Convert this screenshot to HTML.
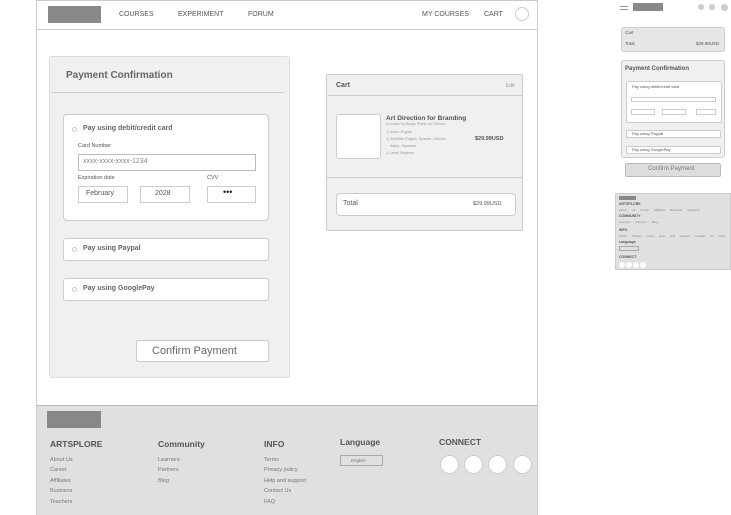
<!DOCTYPE html><html><head><style>
*{margin:0;padding:0;box-sizing:border-box}
body{width:731px;height:515px;background:#fff;font-family:"Liberation Sans",sans-serif;color:#555;position:relative;overflow:hidden}
.a{position:absolute}
.t{position:absolute;white-space:nowrap}
.mh{position:absolute;left:619px;font-size:3.5px;font-weight:bold;white-space:nowrap}
.ml{position:absolute;left:619px;font-size:3px;color:#888;white-space:nowrap;word-spacing:4px}
</style></head><body>
<div class="a" style="left:36px;top:0;width:502px;height:515px;border:1px solid #ccc;border-bottom:none"></div>
<div class="a" style="left:36px;top:29px;width:502px;height:1px;background:#ccc"></div>
<div class="a" style="left:48px;top:6px;width:53px;height:17px;background:#888"></div>
<div class="t" style="left:119px;top:11px;font-size:7px">COURSES</div>
<div class="t" style="left:178px;top:11px;font-size:7px">EXPERIMENT</div>
<div class="t" style="left:248px;top:11px;font-size:7px">FORUM</div>
<div class="t" style="left:422px;top:11px;font-size:7px">MY COURSES</div>
<div class="t" style="left:484px;top:11px;font-size:7px">CART</div>
<div class="a" style="left:515px;top:7px;width:14px;height:14px;border:1px solid #ccc;border-radius:50%"></div>

<div class="a" style="left:49px;top:56px;width:241px;height:322px;background:#f0f0f0;border:1px solid #ddd;border-radius:3px"></div>
<div class="t" style="left:66px;top:70px;font-size:10px;font-weight:bold;color:#666">Payment Confirmation</div>
<div class="a" style="left:52px;top:92px;width:232px;height:1px;background:#ccc"></div>
<div class="a" style="left:63px;top:114px;width:206px;height:107px;background:#fff;border:1px solid #ccc;border-radius:4px"></div>
<div class="a" style="left:72px;top:127px;width:5px;height:5px;border:1px solid #ccc;border-radius:50%"></div>
<div class="t" style="left:83px;top:125px;font-size:7px;font-weight:bold;color:#666">Pay using debit/credit card</div>
<div class="t" style="left:78px;top:143px;font-size:5.5px">Card Number</div>
<div class="a" style="left:78px;top:154px;width:178px;height:17px;border:1px solid #bbb"></div>
<div class="t" style="left:83px;top:158px;font-size:7px;color:#888">xxxx-xxxx-xxxx-1234</div>
<div class="t" style="left:78px;top:175px;font-size:5.5px">Expiration date</div>
<div class="t" style="left:207px;top:175px;font-size:5.5px">CVV</div>
<div class="a" style="left:78px;top:186px;width:50px;height:17px;border:1px solid #ccc"></div>
<div class="t" style="left:86px;top:190px;font-size:7px">February</div>
<div class="a" style="left:140px;top:186px;width:50px;height:17px;border:1px solid #ccc"></div>
<div class="t" style="left:155px;top:190px;font-size:7px">2028</div>
<div class="a" style="left:207px;top:186px;width:49px;height:17px;border:1px solid #ccc"></div>
<div class="t" style="left:223px;top:187px;font-size:9px;color:#222">•••</div>
<div class="a" style="left:63px;top:238px;width:206px;height:23px;background:#fff;border:1px solid #ccc;border-radius:3px"></div>
<div class="a" style="left:72px;top:247px;width:5px;height:5px;border:1px solid #ccc;border-radius:50%"></div>
<div class="t" style="left:83px;top:245px;font-size:7px;font-weight:bold;color:#666">Pay using Paypal</div>
<div class="a" style="left:63px;top:278px;width:206px;height:23px;background:#fff;border:1px solid #ccc;border-radius:3px"></div>
<div class="a" style="left:72px;top:287px;width:5px;height:5px;border:1px solid #ccc;border-radius:50%"></div>
<div class="t" style="left:83px;top:285px;font-size:7px;font-weight:bold;color:#666">Pay using GooglePay</div>
<div class="a" style="left:136px;top:340px;width:133px;height:22px;background:#fff;border:1px solid #ccc;border-radius:2px"></div>
<div class="t" style="left:152px;top:345px;font-size:11px;color:#666">Confirm Payment</div>

<div class="a" style="left:326px;top:74px;width:197px;height:157px;background:#f0f0f0;border:1px solid #ccc;border-radius:2px"></div>
<div class="t" style="left:336px;top:82px;font-size:7px;font-weight:bold">Cart</div>
<div class="t" style="left:506px;top:83px;font-size:5px;color:#999">Edit</div>
<div class="a" style="left:328px;top:95px;width:194px;height:1px;background:#ccc"></div>
<div class="a" style="left:336px;top:114px;width:45px;height:45px;background:#fff;border:1px solid #ccc;border-radius:3px"></div>
<div class="t" style="left:386px;top:115px;font-size:6.5px;font-weight:bold">Art Direction for Branding</div>
<div class="t" style="left:386px;top:122px;font-size:3.5px;color:#999">A course by Mango Pixels, Art Director</div>
<div class="t" style="left:386px;top:130px;font-size:3.5px;color:#999">◎ Audio: English</div>
<div class="t" style="left:386px;top:137px;font-size:3.5px;color:#999">◎ Subtitles: English, Spanish, German,</div>
<div class="t" style="left:390px;top:144px;font-size:3.5px;color:#999">Italian, Japanese</div>
<div class="t" style="left:386px;top:151px;font-size:3.5px;color:#999">◎ Level: Beginner</div>
<div class="t" style="left:475px;top:136px;font-size:5.5px;font-weight:bold">$29.99USD</div>
<div class="a" style="left:326px;top:177px;width:197px;height:1px;background:#ccc"></div>
<div class="a" style="left:336px;top:193px;width:180px;height:23px;background:#fff;border:1px solid #ccc;border-radius:4px"></div>
<div class="t" style="left:343px;top:200px;font-size:7px">Total</div>
<div class="t" style="left:473px;top:201px;font-size:5.5px">$29.99USD</div>

<div class="a" style="left:36px;top:405px;width:502px;height:110px;background:#e0e0e0;border-top:1px solid #bbb;border-left:1px solid #ccc;border-right:1px solid #ccc"></div>
<div class="a" style="left:47px;top:411px;width:54px;height:17px;background:#888"></div>
<div class="t" style="left:50px;top:439px;font-size:8.5px;font-weight:bold">ARTSPLORE</div>
<div class="t" style="left:158px;top:439px;font-size:8.5px;font-weight:bold">Community</div>
<div class="t" style="left:264px;top:439px;font-size:8.5px;font-weight:bold">INFO</div>
<div class="t" style="left:340px;top:437px;font-size:8.5px;font-weight:bold">Language</div>
<div class="t" style="left:439px;top:437px;font-size:8.5px;font-weight:bold">CONNECT</div>
<div class="t" style="left:50px;top:455px;font-size:5.5px;line-height:10.4px;color:#777">About Us<br>Career<br>Affiliates<br>Business<br>Teachers</div>
<div class="t" style="left:158px;top:455px;font-size:5.5px;line-height:10.4px;color:#777">Learners<br>Partners<br>Blog</div>
<div class="t" style="left:264px;top:455px;font-size:5.5px;line-height:10.4px;color:#777">Terms<br>Privacy policy<br>Help and support<br>Contact Us<br>FAQ</div>
<div class="a" style="left:340px;top:455px;width:43px;height:11px;border:1px solid #aaa"></div>
<div class="t" style="left:351px;top:458px;font-size:4.5px;color:#777">English</div>
<div class="a" style="left:440px;top:455px;width:19px;height:19px;border-radius:50%;background:#fff;border:1px solid #ccc"></div>
<div class="a" style="left:464px;top:455px;width:19px;height:19px;border-radius:50%;background:#fff;border:1px solid #ccc"></div>
<div class="a" style="left:488px;top:455px;width:19px;height:19px;border-radius:50%;background:#fff;border:1px solid #ccc"></div>
<div class="a" style="left:513px;top:455px;width:19px;height:19px;border-radius:50%;background:#fff;border:1px solid #ccc"></div>

<!-- mobile -->
<div class="a" style="left:620px;top:6px;width:8px;height:1px;background:#999;box-shadow:0 3px 0 #999"></div>
<div class="a" style="left:633px;top:3px;width:30px;height:8px;background:#888"></div>
<div class="a" style="left:698px;top:4px;width:6px;height:6px;border-radius:50%;background:#ccc"></div>
<div class="a" style="left:709px;top:4px;width:6px;height:6px;border-radius:50%;background:#ccc"></div>
<div class="a" style="left:721px;top:4px;width:7px;height:7px;border-radius:50%;background:#ccc"></div>
<div class="a" style="left:621px;top:27px;width:104px;height:25px;background:#e6e6e6;border:1px solid #ccc;border-radius:3px"></div>
<div class="t" style="left:625px;top:30px;font-size:4.5px">Cart</div>
<div class="t" style="left:625px;top:41px;font-size:4.5px">Total</div>
<div class="t" style="left:696px;top:41px;font-size:4.5px">$29.99USD</div>
<div class="a" style="left:621px;top:60px;width:104px;height:98px;background:#f0f0f0;border:1px solid #ccc;border-radius:3px"></div>
<div class="t" style="left:625px;top:66px;font-size:6px;font-weight:bold">Payment Confirmation</div>
<div class="a" style="left:626px;top:81px;width:96px;height:42px;background:#fff;border:1px solid #ccc;border-radius:2px"></div>
<div class="t" style="left:632px;top:84px;font-size:4px">Pay using debit/credit card</div>
<div class="a" style="left:631px;top:97px;width:85px;height:5px;border:1px solid #ccc"></div>
<div class="a" style="left:631px;top:109px;width:24px;height:6px;border:1px solid #ccc"></div>
<div class="a" style="left:662px;top:109px;width:24px;height:6px;border:1px solid #ccc"></div>
<div class="a" style="left:696px;top:109px;width:20px;height:6px;border:1px solid #ccc"></div>
<div class="a" style="left:626px;top:130px;width:95px;height:8px;background:#fff;border:1px solid #ccc;border-radius:2px"></div>
<div class="t" style="left:632px;top:131px;font-size:4px">Pay using Paypal</div>
<div class="a" style="left:626px;top:146px;width:95px;height:8px;background:#fff;border:1px solid #ccc;border-radius:2px"></div>
<div class="t" style="left:632px;top:147px;font-size:4px">Pay using GooglePay</div>
<div class="a" style="left:625px;top:163px;width:96px;height:14px;background:#ddd;border:1px solid #bbb;border-radius:2px"></div>
<div class="t" style="left:648px;top:166px;font-size:6px;color:#777">Confirm Payment</div>
<div class="a" style="left:615px;top:193px;width:116px;height:77px;background:#e0e0e0;border:1px solid #ccc"></div>
<div class="a" style="left:619px;top:196px;width:17px;height:4px;background:#888"></div>
<div class="mh" style="top:202px">ARTSPLORE</div>
<div class="ml" style="top:208px">About Us Career Affiliates Business Teachers</div>
<div class="mh" style="top:214px">COMMUNITY</div>
<div class="ml" style="top:220px">Learners Partners Blog</div>
<div class="mh" style="top:228px">INFO</div>
<div class="ml" style="top:234px">Terms Privacy policy Help and support Contact Us FAQ</div>
<div class="mh" style="top:240px">Language</div>
<div class="a" style="left:619px;top:246px;width:20px;height:5px;border:1px solid #aaa"></div>
<div class="mh" style="top:255px">CONNECT</div>
<div class="a" style="left:619px;top:262px;width:6px;height:6px;border-radius:50%;background:#fff"></div>
<div class="a" style="left:626px;top:262px;width:6px;height:6px;border-radius:50%;background:#fff"></div>
<div class="a" style="left:633px;top:262px;width:6px;height:6px;border-radius:50%;background:#fff"></div>
<div class="a" style="left:640px;top:262px;width:6px;height:6px;border-radius:50%;background:#fff"></div>
</body></html>
